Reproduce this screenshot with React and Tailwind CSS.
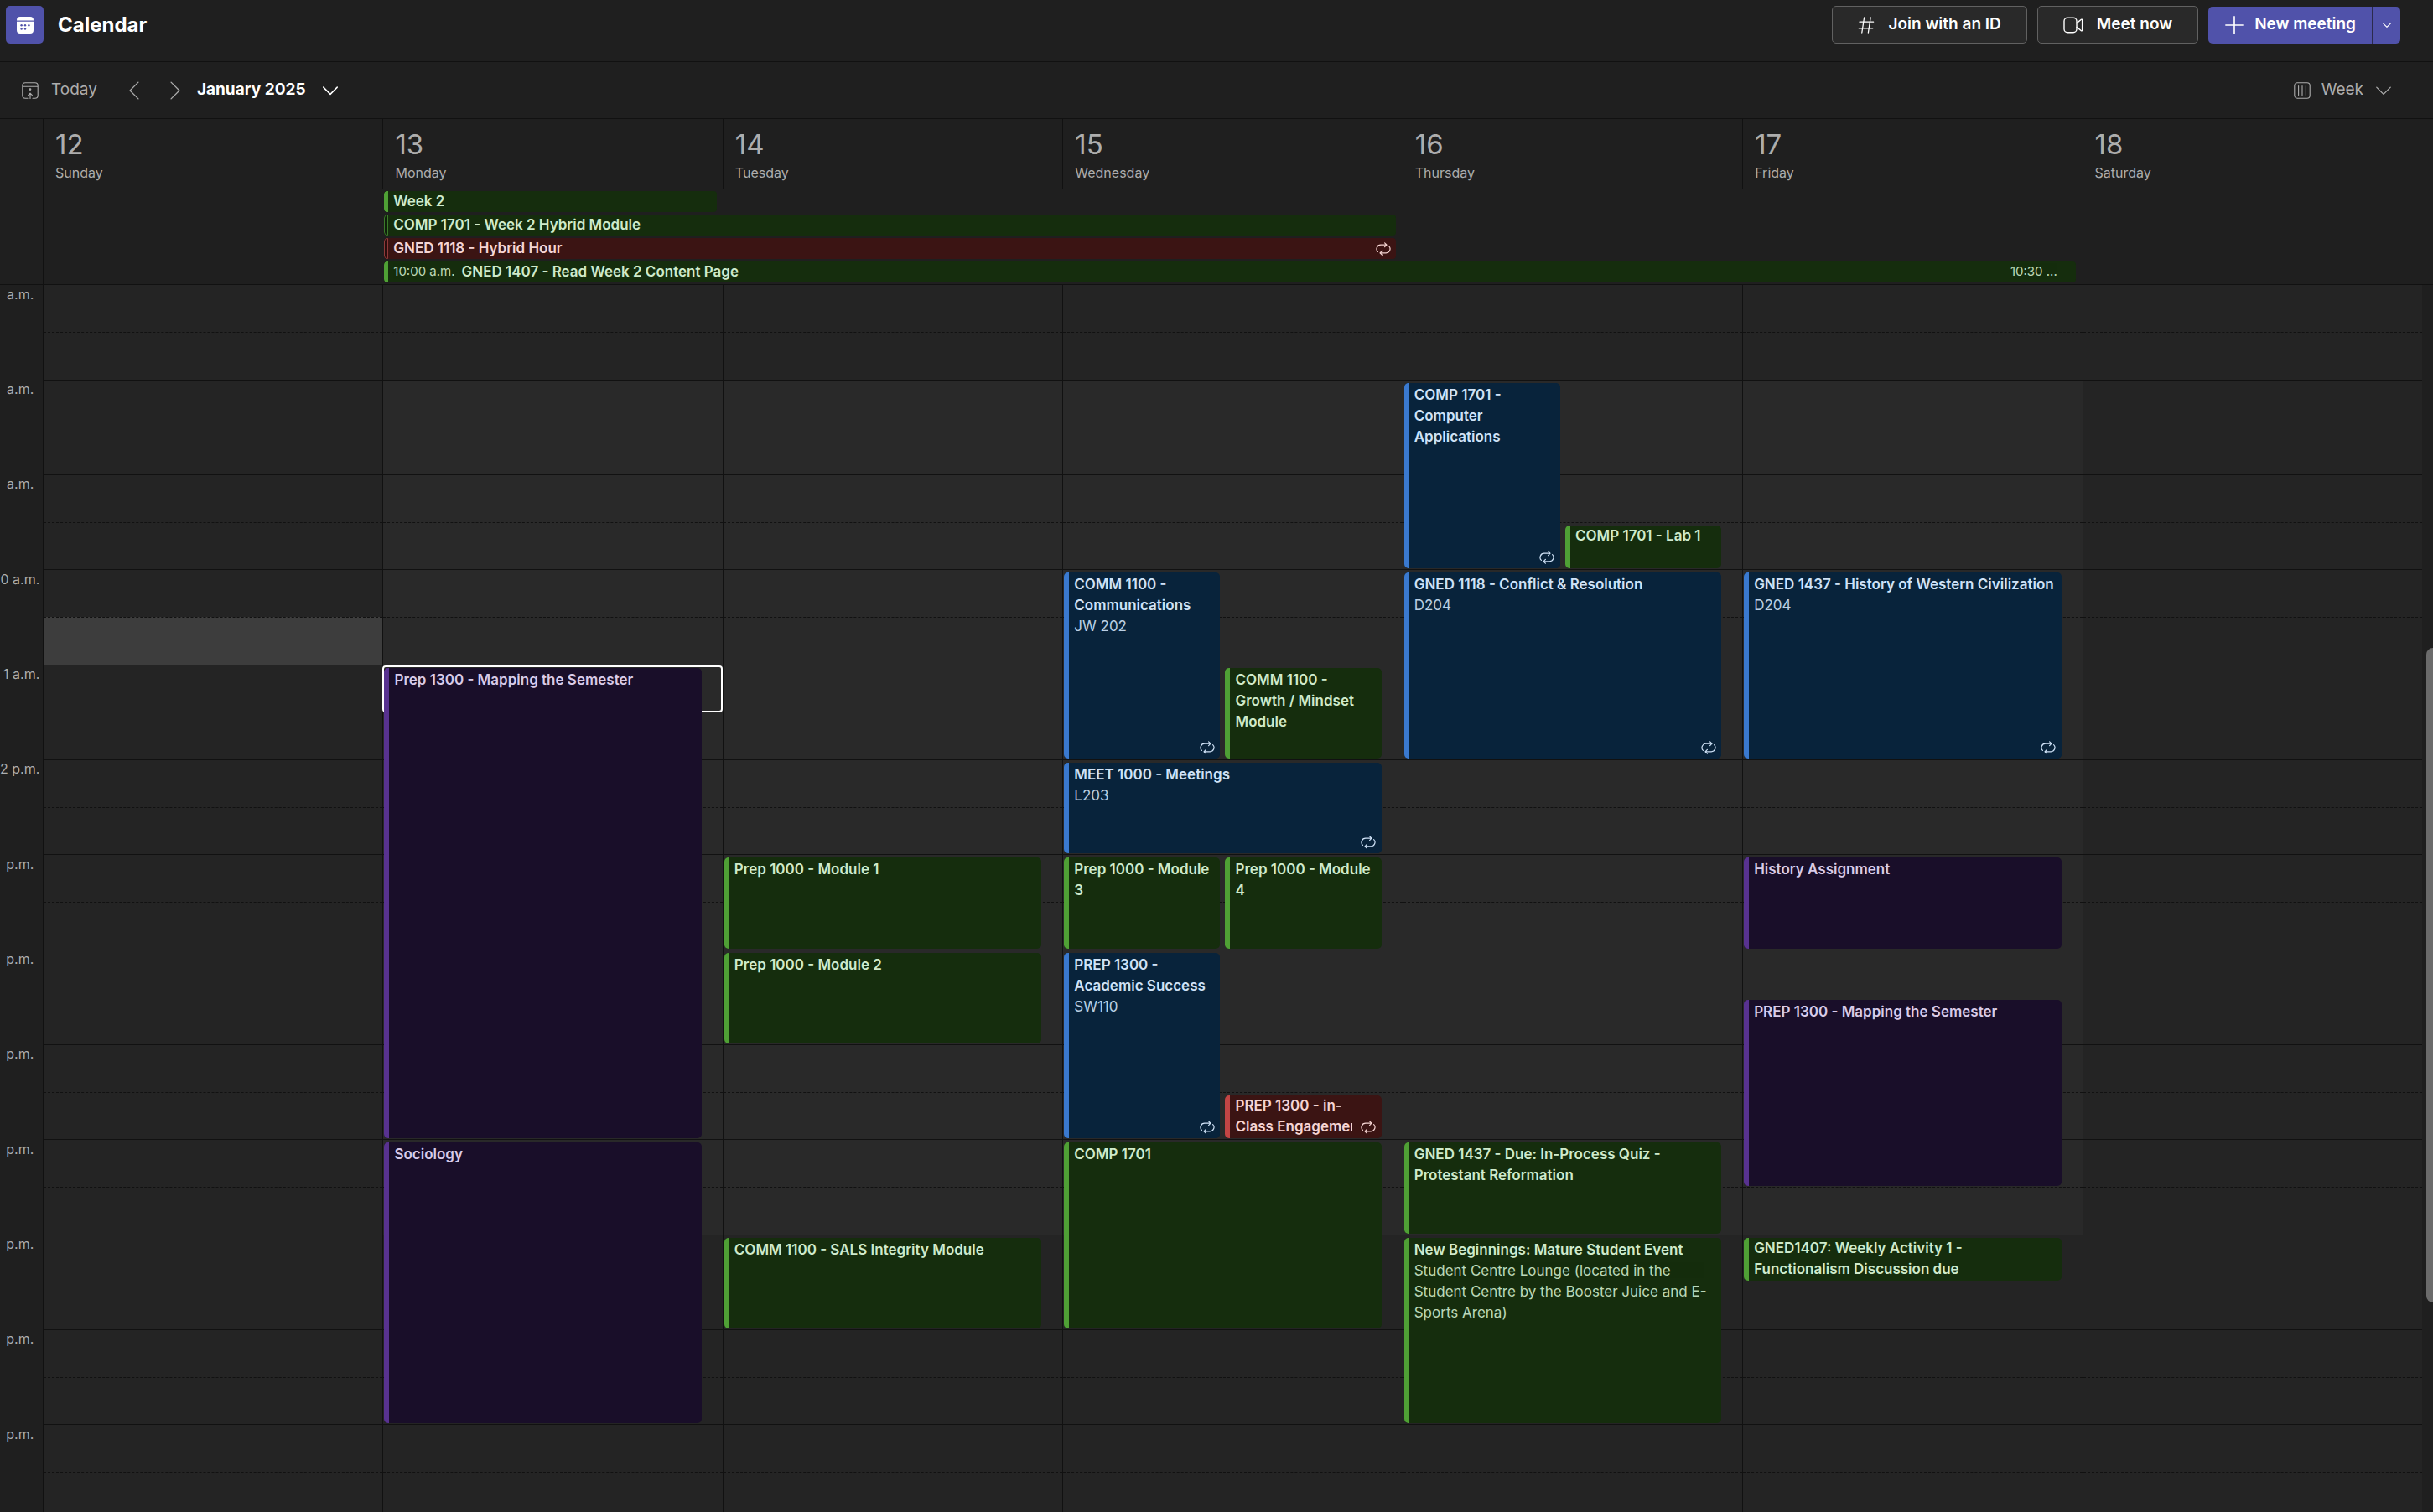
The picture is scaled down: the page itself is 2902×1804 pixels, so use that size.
import React from "react";

const TONES = {
  green: {
    box: "bg-[#152d0d] text-[#cfeacb]",
    stripe: "bg-[#4fa035]",
    hollow: "border border-[#3b7a2a] bg-[#0e1f0a]",
  },
  blue: { box: "bg-[#08233b] text-[#cfe2f7]", stripe: "bg-[#3a79cf]", hollow: "" },
  purple: { box: "bg-[#190e29] text-[#d8cbe8]", stripe: "bg-[#583290]", hollow: "" },
  red: {
    box: "bg-[#3b1413] text-[#f6d5d3]",
    stripe: "bg-[#c34544]",
    hollow: "border border-[#8f3a3a] bg-[#2a0d0d]",
  },
};

const HOURS = [
  { at: 7, label: "a.m." },
  { at: 8, label: "a.m." },
  { at: 9, label: "a.m." },
  { at: 10, label: "0 a.m." },
  { at: 11, label: "1 a.m." },
  { at: 12, label: "2 p.m." },
  { at: 13, label: "p.m." },
  { at: 14, label: "p.m." },
  { at: 15, label: "p.m." },
  { at: 16, label: "p.m." },
  { at: 17, label: "p.m." },
  { at: 18, label: "p.m." },
  { at: 19, label: "p.m." },
];

// start and end are hours on a 24-hour clock; lane is 0 for full width, 1 or 2 for a half.
const DAYS = [
  { date: 12, name: "Sunday", weekend: true, hoverAt: 10.5, events: [] },
  {
    date: 13,
    name: "Monday",
    focusAt: 11,
    events: [
      { title: "Prep 1300 - Mapping the Semester", start: 11, end: 16, tone: "purple" },
      { title: "Sociology", start: 16, end: 19, tone: "purple" },
    ],
  },
  {
    date: 14,
    name: "Tuesday",
    events: [
      { title: "Prep 1000 - Module 1", start: 13, end: 14, tone: "green" },
      { title: "Prep 1000 - Module 2", start: 14, end: 15, tone: "green" },
      { title: "COMM 1100 - SALS Integrity Module", start: 17, end: 18, tone: "green" },
    ],
  },
  {
    date: 15,
    name: "Wednesday",
    events: [
      { title: "COMM 1100 - Communications", place: "JW 202", start: 10, end: 12, tone: "blue", lane: 1, repeat: true },
      { title: "COMM 1100 - Growth / Mindset Module", start: 11, end: 12, tone: "green", lane: 2 },
      { title: "MEET 1000 - Meetings", place: "L203", start: 12, end: 13, tone: "blue", repeat: true },
      { title: "Prep 1000 - Module 3", start: 13, end: 14, tone: "green", lane: 1 },
      { title: "Prep 1000 - Module 4", start: 13, end: 14, tone: "green", lane: 2 },
      { title: "PREP 1300 - Academic Success", place: "SW110", start: 14, end: 16, tone: "blue", lane: 1, repeat: true },
      { title: "PREP 1300 - in-Class Engagement", start: 15.5, end: 16, tone: "red", lane: 2, repeat: true },
      { title: "COMP 1701", start: 16, end: 18, tone: "green" },
    ],
  },
  {
    date: 16,
    name: "Thursday",
    events: [
      { title: "COMP 1701 - Computer Applications", start: 8, end: 10, tone: "blue", lane: 1, repeat: true },
      { title: "COMP 1701 - Lab 1", start: 9.5, end: 10, tone: "green", lane: 2 },
      { title: "GNED 1118 - Conflict & Resolution", place: "D204", start: 10, end: 12, tone: "blue", repeat: true },
      { title: "GNED 1437 - Due: In-Process Quiz - Protestant Reformation", start: 16, end: 17, tone: "green" },
      {
        title: "New Beginnings: Mature Student Event",
        place: "Student Centre Lounge (located in the Student Centre by the Booster Juice and E-Sports Arena)",
        start: 17,
        end: 19,
        tone: "green",
      },
    ],
  },
  {
    date: 17,
    name: "Friday",
    events: [
      { title: "GNED 1437 - History of Western Civilization", place: "D204", start: 10, end: 12, tone: "blue", repeat: true },
      { title: "History Assignment", start: 13, end: 14, tone: "purple" },
      { title: "PREP 1300 - Mapping the Semester", start: 14.5, end: 16.5, tone: "purple" },
      { title: "GNED1407: Weekly Activity 1 - Functionalism Discussion due", start: 17, end: 17.5, tone: "green" },
    ],
  },
  { date: 18, name: "Saturday", weekend: true, events: [] },
];

const ALL_DAY = [
  { title: "Week 2", tone: "green", span: "col-start-2 col-span-1" },
  { title: "COMP 1701 - Week 2 Hybrid Module", tone: "green", span: "col-start-2 col-span-3", hollow: true },
  { title: "GNED 1118 - Hybrid Hour", tone: "red", span: "col-start-2 col-span-3", hollow: true, repeat: true },
  { title: "GNED 1407 - Read Week 2 Content Page", tone: "green", span: "col-start-2 col-span-5", from: "10:00 a.m.", to: "10:30 ..." },
];

const LANES = ["col-start-1 col-span-2", "col-start-1", "col-start-2"];
const FIRST_HOUR = 7;
const SLOTS = Array.from({ length: 26 }, (_, i) => FIRST_HOUR + i / 2);
const rowOf = (hour) => (hour - FIRST_HOUR) * 2 + 1;

function Stroke({ className, children, viewBox = "0 0 20 20", width = 1 }) {
  return (
    <svg
      className={className}
      viewBox={viewBox}
      fill="none"
      stroke="currentColor"
      strokeWidth={width}
      strokeLinecap="round"
      strokeLinejoin="round"
      aria-hidden="true"
    >
      {children}
    </svg>
  );
}

const ChevronDown = ({ className, width }) => (
  <Stroke className={className} width={width}>
    <path d="M2.5 6.5 10 14l7.5-7.5" />
  </Stroke>
);

const RepeatIcon = ({ className }) => (
  <Stroke className={className} viewBox="0 0 18 16" width={1.2}>
    <path d="M10.6 .8 13 3.2 10.6 5.6M13 3.2H5.8A4.8 4.8 0 0 0 2.4 11.4" />
    <path d="M7.4 15.2 5 12.8 7.4 10.4M5 12.8H12.2A4.8 4.8 0 0 0 15.6 4.6" />
  </Stroke>
);

function Event({ event }) {
  const tone = TONES[event.tone];
  const short = event.end - event.start <= 0.5;
  return (
    <button
      type="button"
      className={`relative mt-1 mb-px ml-px flex min-h-0 min-w-0 overflow-hidden rounded-[5px] text-left ${tone.box} ${LANES[event.lane || 0]}`}
      style={{ gridRow: `${rowOf(event.start)} / ${rowOf(event.end)}` }}
    >
      <span className={`w-[6px] shrink-0 self-stretch ${tone.stripe}`} />
      <span className={`min-w-0 flex-1 self-start px-[6px] text-[17px] leading-[25px] ${short ? "" : "pt-[2px]"}`}>
        <span className="block font-semibold">{event.title}</span>
        {event.place && <span className="block opacity-90">{event.place}</span>}
      </span>
      {event.repeat && (
        <span className={`absolute right-0 bottom-0 flex h-[26px] w-[35px] items-center justify-center pl-1 ${tone.box}`}>
          <RepeatIcon className="h-4 w-[18px]" />
        </span>
      )}
    </button>
  );
}

function slotTone(day, hour) {
  if (day.hoverAt === hour) return "bg-[#3d3d3d]";
  if (!day.weekend && hour >= 8 && hour < 17) return "bg-[#292929]";
  return "bg-[#242424]";
}

function DayColumn({ day }) {
  return (
    <div className="grid auto-rows-[57px_57px_56px] grid-cols-[minmax(0,1fr)_minmax(0,1fr)_20px] gap-x-[5px] border-l border-[#111111]">
      {SLOTS.map((hour) => (
        <div
          key={hour}
          className={`col-span-full border-t border-[#111111] ${Number.isInteger(hour) ? "border-solid" : "border-dashed"} ${slotTone(day, hour)}`}
          style={{ gridRow: rowOf(hour) }}
        />
      ))}
      {day.focusAt && (
        <div
          className="relative col-span-full mt-px -mb-px -ml-px rounded-sm border-2 border-white"
          style={{ gridRow: rowOf(day.focusAt) }}
        />
      )}
      {day.events.map((event) => (
        <Event key={event.title} event={event} />
      ))}
    </div>
  );
}

function AllDayEvent({ event }) {
  const tone = TONES[event.tone];
  return (
    <button
      type="button"
      className={`mr-2 ml-px flex items-center overflow-hidden rounded-[4px] pr-[6px] text-left text-[17px] ${tone.box} ${event.span}`}
    >
      <span className={`h-full w-[5px] shrink-0 rounded-l-[4px] ${event.hollow ? tone.hollow : tone.stripe}`} />
      {event.from && <span className="pl-[6px] text-[15px] opacity-90">{event.from}</span>}
      <span className={`font-semibold ${event.from ? "pl-2" : "pl-[6px]"}`}>{event.title}</span>
      <span className="flex-1" />
      {event.to && <span className="pr-4 text-[15px] opacity-90">{event.to}</span>}
      {event.repeat && <RepeatIcon className="h-4 w-[18px]" />}
    </button>
  );
}

export default function App() {
  return (
    <div className="flex h-screen flex-col overflow-hidden bg-[#1f1f1f] font-['Inter','Liberation_Sans',sans-serif] text-[#adadad]">
      <header className="flex h-[73px] shrink-0 items-start justify-between pt-[7px] pr-[39px] pl-[7px]">
        <div className="flex items-center gap-[17px]">
          <span className="flex size-[45px] items-center justify-center rounded-[5px] bg-[#5052aa]">
            <svg className="size-5" viewBox="0 0 20 20" aria-hidden="true">
              <path fill="#fff" d="M4 0h12a4 4 0 0 1 4 4v.6H0V4a4 4 0 0 1 4-4ZM0 5.8h20V16a4 4 0 0 1-4 4H4a4 4 0 0 1-4-4Z" />
              <g fill="#5052aa">
                <circle cx="5.6" cy="10.3" r="1.2" />
                <circle cx="10" cy="10.3" r="1.2" />
                <circle cx="14.4" cy="10.3" r="1.2" />
                <circle cx="5.6" cy="14.5" r="1.2" />
                <circle cx="10" cy="14.5" r="1.2" />
              </g>
            </svg>
          </span>
          <h1 className="text-[24px] font-bold text-white">Calendar</h1>
        </div>
        <div className="flex items-center gap-3 text-[19px] font-semibold text-white">
          <button type="button" className="flex h-[45px] items-center gap-4 rounded-[5px] border border-[#616161] bg-[#292929] px-[30px]">
            <Stroke className="size-5" width={1.3}>
              <path d="M7.6 1 4.8 19M15.2 1l-2.8 18M2 6.2h16.6M1.2 13.8h16.6" />
            </Stroke>
            Join with an ID
          </button>
          <button type="button" className="flex h-[45px] items-center gap-4 rounded-[5px] border border-[#616161] bg-[#292929] px-[30px]">
            <Stroke className="h-5 w-6" viewBox="0 0 24 20" width={1.4}>
              <rect x="1" y="1.2" width="15" height="17.6" rx="4" />
              <path d="m16 7.6 5.4-4.3c.5-.4 1.2-.1 1.2.6v12.2c0 .7-.7 1-1.2.6L16 12.4" />
            </Stroke>
            Meet now
          </button>
          <div className="flex h-11 overflow-hidden rounded-[5px] bg-[#5052aa]">
            <button type="button" className="flex items-center gap-[13px] pr-[19px] pl-5">
              <Stroke className="size-[22px]" width={1.5}>
                <path d="M10 .8v18.4M.8 10h18.4" />
              </Stroke>
              New meeting
            </button>
            <button type="button" aria-label="More meeting options" className="flex w-[34px] items-center justify-center border-l border-[#2b2b4d]">
              <ChevronDown className="size-3" width={1.8} />
            </button>
          </div>
        </div>
      </header>

      <div className="flex h-[69px] shrink-0 items-center justify-between border-y border-[#111111] pr-[48px] pl-[26px] text-[19px]">
        <div className="flex items-center">
          <button type="button" className="flex items-center gap-[15px]">
            <Stroke className="size-5" width={1.1}>
              <path d="M7 19.2H4.2A3.4 3.4 0 0 1 .8 15.8V4.2A3.4 3.4 0 0 1 4.2.8h11.6a3.4 3.4 0 0 1 3.4 3.4v11.6a3.4 3.4 0 0 1-3.4 3.4H13M.8 5.2h18.4M10 19.6v-6M7.6 15.6 10 13.2l2.4 2.4" />
              <circle cx="10" cy="8.6" r=".8" fill="currentColor" />
            </Stroke>
            Today
          </button>
          <button type="button" aria-label="Previous week" className="ml-[33px]">
            <Stroke className="size-[22px]" width={1.2}>
              <path d="M14.5 1 5.5 10l9 9" />
            </Stroke>
          </button>
          <button type="button" aria-label="Next week" className="ml-[27px]">
            <Stroke className="size-[22px]" width={1.2}>
              <path d="m5.5 1 9 9-9 9" />
            </Stroke>
          </button>
          <button type="button" className="ml-[15px] flex items-center gap-[18px] font-bold text-white">
            January 2025
            <ChevronDown className="size-[22px]" width={1.4} />
          </button>
        </div>
        <button type="button" className="flex items-center gap-[13px]">
          <Stroke className="size-5" width={1.1}>
            <rect x=".8" y=".8" width="18.4" height="18.4" rx="3.4" />
            <path d="M5.6 4.5v11M10 4.5v11M14.4 4.5v11" />
          </Stroke>
          Week
          <ChevronDown className="size-[22px]" width={1.2} />
        </button>
      </div>

      <div className="grid h-[83px] shrink-0 grid-cols-[51px_repeat(7,minmax(0,1fr))_13px]">
        <span />
        {DAYS.map((day) => (
          <div key={day.date} className="border-l border-[#111111] pt-[11px] pl-[14px]">
            <div className="text-[33px] leading-[38px]">{day.date}</div>
            <div className="text-[16px] leading-[30px]">{day.name}</div>
          </div>
        ))}
      </div>

      <div className="grid shrink-0 grid-cols-[51px_minmax(0,1fr)_13px] border-t border-[#111111]">
        <span />
        <div className="grid auto-rows-[25px] grid-cols-7 gap-y-[3px] border-l border-[#111111] py-[2px]">
          {ALL_DAY.map((event) => (
            <AllDayEvent key={event.title} event={event} />
          ))}
        </div>
      </div>

      <div className="flex min-h-0 flex-1">
        <main className="grid min-w-0 flex-1 grid-cols-[51px_repeat(7,minmax(0,1fr))] overflow-hidden">
          <div className="grid auto-rows-[113px_113px_114px] border-t border-[#111111] text-right text-[16px] leading-[22px] whitespace-nowrap">
            {HOURS.map(({ at, label }) => (
              <span key={at} className={label.length > 4 ? "pr-[7px]" : "pr-[14px]"}>
                {label}
              </span>
            ))}
          </div>
          {DAYS.map((day) => (
            <DayColumn key={day.date} day={day} />
          ))}
        </main>
        <div className="flex w-[13px] shrink-0 flex-col items-end border-t border-[#111111]">
          <div className="grow-[433]" />
          <div className="w-2 grow-[781] rounded-l-full bg-[#6b6b6b]" />
          <div className="grow-[250]" />
        </div>
      </div>
    </div>
  );
}
